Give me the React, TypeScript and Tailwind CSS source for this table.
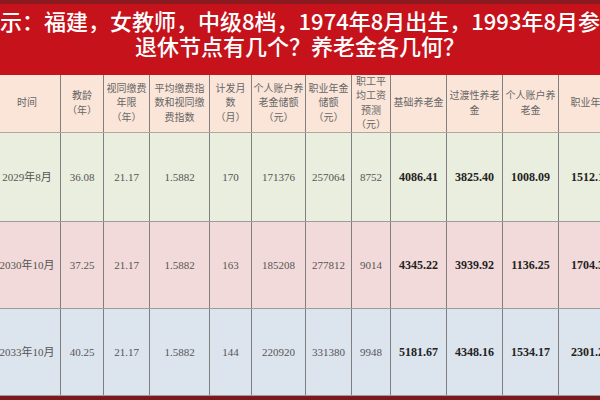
import React from "react";

const cols = "grid grid-cols-[67px_43px_46px_60px_42px_54px_46px_39px_56px_56px_56px_64px]";

const headers: string[][] = [
  ["时间"],
  ["教龄", "（年）"],
  ["视同缴费", "年限", "（年）"],
  ["平均缴费指", "数和视同缴", "费指数"],
  ["计发月", "数", "（月）"],
  ["个人账户养", "老金储额", "（元）"],
  ["职业年金", "储额", "（元）"],
  ["职工平", "均工资", "预测", "（元）"],
  ["基础养老金"],
  ["过渡性养老", "金"],
  ["个人账户养", "老金"],
  ["职业年金"],
];

interface Row {
  bg: string;
  h: string;
  cells: string[];
}

const rows: Row[] = [
  {
    bg: "bg-[#e9eedf]",
    h: "h-[89px]",
    cells: ["2029年8月", "36.08", "21.17", "1.5882", "170", "171376", "257064", "8752", "4086.41", "3825.40", "1008.09", "1512.12"],
  },
  {
    bg: "bg-[#f2dada]",
    h: "h-[87px]",
    cells: ["2030年10月", "37.25", "21.17", "1.5882", "163", "185208", "277812", "9014", "4345.22", "3939.92", "1136.25", "1704.31"],
  },
  {
    bg: "bg-[#dce4ee]",
    h: "h-[87px]",
    cells: ["2033年10月", "40.25", "21.17", "1.5882", "144", "220920", "331380", "9948", "5181.67", "4348.16", "1534.17", "2301.25"],
  },
];

export default function App() {
  return (
    <div className="w-[600px] h-[400px] overflow-hidden flex flex-col bg-white">
      {/* title band */}
      <div className="h-[75px] shrink-0 bg-[#c5121b] border-t-4 border-[#8a1a1f] pt-[4px] text-white font-medium text-[22px] leading-[25px] font-['Noto_Sans_CJK_SC',sans-serif]">
        <div className="flex justify-center whitespace-nowrap overflow-hidden">
          <span className="shrink-0">展示：福建，女教师，中级8档，1974年8月出生，1993年8月参工</span>
        </div>
        <div className="text-center whitespace-nowrap">退休节点有几个？养老金各几何？</div>
      </div>

      {/* table */}
      <div className="ml-[-6px] w-[665px] font-['Liberation_Serif','Noto_Sans_CJK_SC',serif]">
        <div className={`${cols} h-[58px] bg-[#fbe5d9] border-b border-[#b0a8a0]`}>
          {headers.map((lines, i) => (
            <div
              key={i}
              className="flex flex-col items-center justify-center border-r border-[#7f7f7f] text-[10px] leading-[14.5px] text-[#666] whitespace-nowrap overflow-hidden"
            >
              {lines.map((l, j) => (
                <span key={j}>{l}</span>
              ))}
            </div>
          ))}
        </div>
        {rows.map((r, ri) => (
          <div key={ri} className={`${cols} ${r.h} ${r.bg} border-b border-[#9c9c9c]`}>
            {r.cells.map((c, i) => (
              <div
                key={i}
                className={
                  i >= 8
                    ? "flex items-center justify-center border-r border-[#7f7f7f] text-[12px] font-bold text-[#222] whitespace-nowrap overflow-hidden"
                    : "flex items-center justify-center border-r border-[#7f7f7f] text-[11px] text-[#555] whitespace-nowrap overflow-hidden"
                }
              >
                {c}
              </div>
            ))}
          </div>
        ))}
      </div>
      <div className="flex-1 bg-[#7a1a1f]" />
    </div>
  );
}
